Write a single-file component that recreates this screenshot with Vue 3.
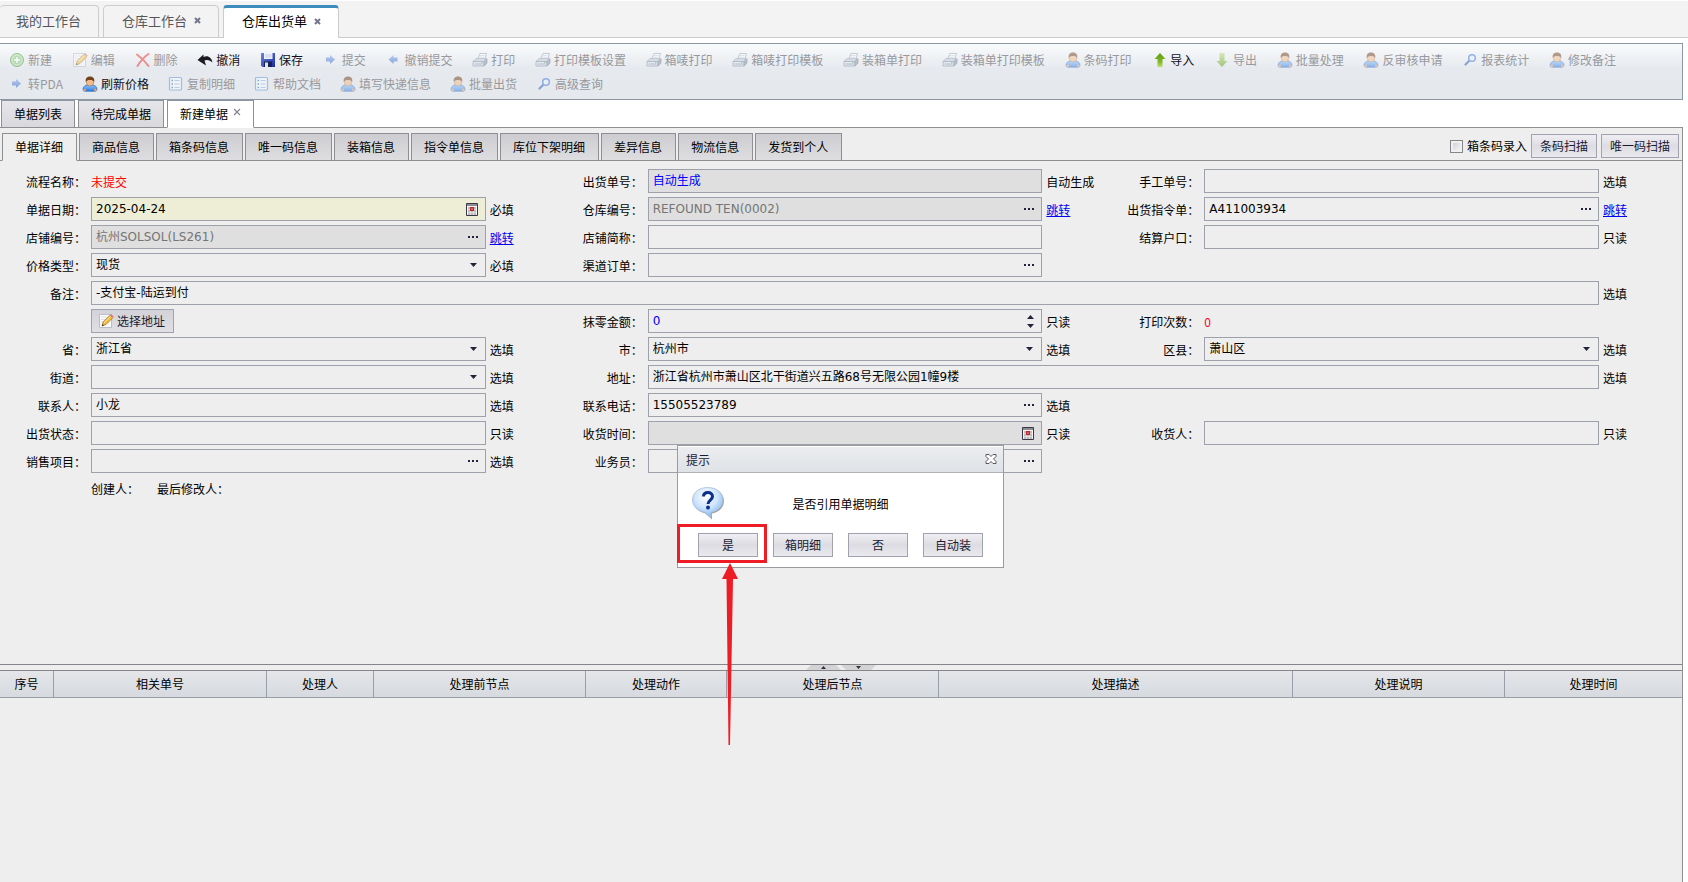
<script setup>
import { ref } from 'vue'

const pageTabs = [
  { name: '我的工作台', closable: false },
  { name: '仓库工作台', closable: true },
  { name: '仓库出货单', closable: true }
]

const toolRows = [
  [
    ['新建', 'add'],
    ['编辑', 'edit'],
    ['删除', 'cross'],
    ['撤消', 'undo', true],
    ['保存', 'save', true],
    ['提交', 'right'],
    ['撤销提交', 'left'],
    ['打印', 'print'],
    ['打印模板设置', 'print'],
    ['箱唛打印', 'print'],
    ['箱唛打印模板', 'print'],
    ['装箱单打印', 'print'],
    ['装箱单打印模板', 'print'],
    ['条码打印', 'user'],
    ['导入', 'up', true],
    ['导出', 'down'],
    ['批量处理', 'user'],
    ['反审核申请', 'user'],
    ['报表统计', 'search'],
    ['修改备注', 'user']
  ],
  [
    ['转PDA', 'right'],
    ['刷新价格', 'user', true],
    ['复制明细', 'list'],
    ['帮助文档', 'list'],
    ['填写快递信息', 'user'],
    ['批量出货', 'user'],
    ['高级查询', 'search']
  ]
]

const docTabs = ['单据列表', '待完成单据', '新建单据']
const infoTabs = ['单据详细', '商品信息', '箱条码信息', '唯一码信息', '装箱信息', '指令单信息', '库位下架明细', '差异信息', '物流信息', '发货到个人']

const rows = ref([
  [
    { id: 'flow', label: '流程名称', kind: 'plain', value: '未提交', tone: 'red' },
    { id: 'outNo', label: '出货单号', kind: 'text', value: '自动生成', tone: 'blue', off: true, hint: '自动生成' },
    { id: 'manualNo', label: '手工单号', kind: 'text', value: '', hint: '选填' }
  ],
  [
    { id: 'docDate', label: '单据日期', kind: 'date', value: '2025-04-24', must: true, hint: '必填' },
    { id: 'depot', label: '仓库编号', kind: 'more', value: 'REFOUND TEN(0002)', off: true, link: '跳转' },
    { id: 'order', label: '出货指令单', kind: 'more', value: 'A411003934', link: '跳转' }
  ],
  [
    { id: 'shop', label: '店铺编号', kind: 'more', value: '杭州SOLSOL(LS261)', off: true, link: '跳转' },
    { id: 'shopName', label: '店铺简称', kind: 'text', value: '' },
    { id: 'account', label: '结算户口', kind: 'text', value: '', hint: '只读' }
  ],
  [
    { id: 'priceType', label: '价格类型', kind: 'select', value: '现货', hint: '必填' },
    { id: 'channel', label: '渠道订单', kind: 'more', value: '' }
  ],
  [{ id: 'remark', label: '备注', kind: 'text', value: '-支付宝-陆运到付', span: 3, hint: '选填' }],
  [
    { id: 'pick', kind: 'button', value: '选择地址' },
    { id: 'rounding', label: '抹零金额', kind: 'spin', value: '0', tone: 'blue', hint: '只读' },
    { id: 'prints', label: '打印次数', kind: 'plain', value: '0', tone: 'pink' }
  ],
  [
    { id: 'province', label: '省', kind: 'select', value: '浙江省', hint: '选填' },
    { id: 'city', label: '市', kind: 'select', value: '杭州市', hint: '选填' },
    { id: 'district', label: '区县', kind: 'select', value: '萧山区', hint: '选填' }
  ],
  [
    { id: 'street', label: '街道', kind: 'select', value: '', hint: '选填' },
    { id: 'address', label: '地址', kind: 'text', value: '浙江省杭州市萧山区北干街道兴五路68号无限公园1幢9楼', span: 2, hint: '选填' }
  ],
  [
    { id: 'contact', label: '联系人', kind: 'text', value: '小龙', hint: '选填' },
    { id: 'phone', label: '联系电话', kind: 'more', value: '15505523789', hint: '选填' }
  ],
  [
    { id: 'state', label: '出货状态', kind: 'text', value: '', hint: '只读' },
    { id: 'received', label: '收货时间', kind: 'date', value: '', off: true, hint: '只读' },
    { id: 'receiver', label: '收货人', kind: 'text', value: '', hint: '只读' }
  ],
  [
    { id: 'project', label: '销售项目', kind: 'more', value: '', hint: '选填' },
    { id: 'clerk', label: '业务员', kind: 'more', value: '' }
  ]
])

const columns = ['序号', '相关单号', '处理人', '处理前节点', '处理动作', '处理后节点', '处理描述', '处理说明', '处理时间']
const answers = ['是', '箱明细', '否', '自动装']
</script>

<template>
  <svg class="sprite" aria-hidden="true">
    <defs>
      <linearGradient id="g-green" x1="0" y1="0" x2="0" y2="1">
        <stop offset="0" stop-color="#5f9a12" /><stop offset="0.6" stop-color="#7fb822" /><stop offset="1" stop-color="#b8de72" />
      </linearGradient>
      <linearGradient id="g-green-down" x1="0" y1="0" x2="0" y2="1">
        <stop offset="0" stop-color="#b8de72" /><stop offset="1" stop-color="#5f9a12" />
      </linearGradient>
      <linearGradient id="g-body" x1="0" y1="0" x2="0" y2="1">
        <stop offset="0" stop-color="#8cc4ff" /><stop offset="1" stop-color="#2b7be0" />
      </linearGradient>
      <linearGradient id="g-arrow" x1="0" y1="0" x2="0" y2="1">
        <stop offset="0" stop-color="#7ea6ee" /><stop offset="1" stop-color="#2a5fc4" />
      </linearGradient>
      <linearGradient id="g-save" x1="0" y1="0" x2="1" y2="1">
        <stop offset="0" stop-color="#6c83e0" /><stop offset="1" stop-color="#1c2c96" />
      </linearGradient>
      <radialGradient id="g-bubble" cx="0.45" cy="0.3" r="0.75">
        <stop offset="0" stop-color="#ffffff" /><stop offset="0.5" stop-color="#cfe4fb" /><stop offset="1" stop-color="#6aaef0" />
      </radialGradient>
    </defs>
    <symbol id="i-add" viewBox="0 0 16 16">
      <circle cx="8" cy="8" r="6.5" fill="#8fd07c" stroke="#3f9a33" />
      <circle cx="8" cy="8" r="5" fill="none" stroke="#c4ebb8" />
      <path d="M6.8 4.5h2.4v2.3h2.3v2.4H9.2v2.3H6.8V9.2H4.5V6.8h2.3z" fill="#fff" stroke="#3f9a33" stroke-width="0.5" />
    </symbol>
    <symbol id="i-edit" viewBox="0 0 16 16">
      <path d="M1.5 1.5h12v13h-12z" fill="#fbfbfd" stroke="#b9bdca" />
      <path d="M3 4h7M3 6.500h5M3 9h3" stroke="#dcdfe8" />
      <path d="M4 13l1.200-4L12 2.200 14.700 4.800 8 11.500z" fill="#f3bd3c" stroke="#a9741c" stroke-width="0.8" />
      <path d="M12 2.200L13.200 1l2.500 2.500-1 1.300z" fill="#e07a7a" />
      <path d="M6 9.700l6.500-6" stroke="#fde7a3" />
      <path d="M4 13l.5-1.900 1.400 1.300z" fill="#33302a" />
    </symbol>
    <symbol id="i-cross" viewBox="0 0 16 16">
      <path d="M3 2.500C7 5.500 12 10.500 14.500 14M14.500 2C10 5 6 10 3.500 14" fill="none" stroke="#e8322a" stroke-width="2" stroke-linecap="round" />
    </symbol>
    <symbol id="i-undo" viewBox="0 0 16 16">
      <path d="M0.500 8L6.500 2.500v2.500C11 3 14.500 5.500 15.500 10.500 13 8 10 7.300 7.500 8.500L9 13.500z" fill="#1c1c20" />
    </symbol>
    <symbol id="i-save" viewBox="0 0 16 16">
      <path d="M1 1h14v14H2.500L1 13.500z" fill="url(#g-save)" />
      <path d="M4 1h8.500v6H4z" fill="#f2f4fc" />
      <path d="M5 3h6.500M5 5h6.500" stroke="#c3cae8" />
      <path d="M4 9.500h8V15H4z" fill="#16205c" />
      <path d="M5 10.500h3V15H5z" fill="#dfe4f6" />
    </symbol>
    <symbol id="i-right" viewBox="0 0 16 16">
      <path d="M3 5.500h4V3L12 7.500 7 12V9.500H3z" fill="url(#g-arrow)" />
    </symbol>
    <symbol id="i-left" viewBox="0 0 16 16">
      <path d="M12.500 5.500h-4V3L3.500 7.500l5 4.500V9.500h4z" fill="url(#g-arrow)" />
    </symbol>
    <symbol id="i-print" viewBox="0 0 16 16">
      <path d="M5.500 7.500L8 1.500h6.500L12.500 8z" fill="#fcfdff" stroke="#7f8da3" stroke-width="0.8" />
      <path d="M8 3.500h4.500M7.300 5.300h4.500" stroke="#b5bfce" stroke-width="0.7" />
      <path d="M1 9.500l3-2.800h10.500L12 9.500z" fill="#c7d0de" stroke="#6d7b92" stroke-width="0.7" />
      <path d="M1 9.500h11V14H1z" fill="#e6ebf3" stroke="#6d7b92" stroke-width="0.8" />
      <path d="M12 9.500l3-2.800v4.500L12 14z" fill="#8592aa" stroke="#5d6b84" stroke-width="0.7" />
      <path d="M2.500 12h8" stroke="#7787a3" />
      <path d="M9 10.700h1.500" stroke="#45b04a" />
    </symbol>
    <symbol id="i-user" viewBox="0 0 16 16">
      <path d="M1 13.500C1 10.500 3.500 9 5.500 9h5c2 0 4.500 1.500 4.500 4.500 0 1-.8 1.700-2 1.700H3c-1.200 0-2-.7-2-1.700z" fill="url(#g-body)" stroke="#2564b8" stroke-width="0.7" />
      <path d="M1 13.500c.2 1 1.200 1.700 2.500 1.700L4 12.500zM15 13.500c-.2 1-1.200 1.700-2.500 1.700L12 12.500z" fill="#f0a868" />
      <ellipse cx="8" cy="6" rx="3.700" ry="4" fill="#f2bd8c" stroke="#9c6234" stroke-width="0.5" />
      <path d="M3.800 6C3 2 5.500.5 8 .5S13 2 12.200 6C11.500 4.500 10 4 8 4S4.500 4.500 3.800 6z" fill="#74421c" />
    </symbol>
    <symbol id="i-up" viewBox="0 0 16 16">
      <path d="M9 1l5.500 6H11.500v8h-5V7H3.500z" fill="url(#g-green)" />
    </symbol>
    <symbol id="i-down" viewBox="0 0 16 16">
      <path d="M8 15l5.500-6H10.500V1h-5v8H2.500z" fill="url(#g-green-down)" />
    </symbol>
    <symbol id="i-search" viewBox="0 0 16 16">
      <path d="M7.500 8.500L3.500 12.500" stroke="#2c5ec0" stroke-width="2.200" stroke-linecap="round" />
      <circle cx="10" cy="6" r="3.300" fill="#eaf3ff" stroke="#3c74d4" stroke-width="1.500" />
    </symbol>
    <symbol id="i-list" viewBox="0 0 16 16">
      <rect x="1.500" y="1.500" width="12" height="12.500" rx="1" fill="#fbfdff" stroke="#5b95d6" stroke-width="1.200" />
      <path d="M3.500 4.500H5M3.500 8H5M3.500 11.500H5" stroke="#2a6dbd" stroke-width="1.500" />
      <path d="M6.500 4.500h5M6.500 8h5M6.500 11.500h5" stroke="#8ab4e2" />
    </symbol>
    <symbol id="i-cal" viewBox="0 0 12 13">
      <path d="M.5.500h11v12H.5z" fill="#f4f4f4" stroke="#3a3844" />
      <path d="M1 2h10" stroke="#8c8c92" stroke-width="2" />
      <path d="M2 4h8v8H2z" fill="#bdbdc0" />
      <path d="M2 6.500h8M2 9.500h8M4.500 4v8M7.500 4v8" stroke="#f4f4f4" stroke-width="0.500" />
      <path d="M4 4h4v4H4z" fill="#c0282c" />
      <path d="M5.500 5.500h1v1h-1z" fill="#fff" />
    </symbol>
  </svg>

  <div class="page">
    <nav class="page-tabs">
      <a v-for="(t, i) in pageTabs" :key="t.name" href="#" class="page-tab" :class="{ active: i === 2 }">
        {{ t.name }}
        <svg v-if="t.closable" class="tab-x" viewBox="0 0 7 7"><path d="M1 1l5 5M6 1L1 6" stroke="#72768c" stroke-width="2" /></svg>
      </a>
    </nav>

    <main class="work">
      <div class="toolbar">
        <div v-for="(row, r) in toolRows" :key="r" class="tool-row">
          <button v-for="[name, icon, on] in row" :key="name" type="button" class="tool" :disabled="!on">
            <svg class="icon"><use :href="'#i-' + icon" /></svg>{{ name }}
          </button>
        </div>
      </div>

      <nav class="doc-tabs">
        <a v-for="(t, i) in docTabs" :key="t" href="#" class="tab doc-tab" :class="{ active: i === 2 }">
          {{ t }}
          <svg v-if="i === 2" class="doc-x" viewBox="0 0 8 8"><path d="M1 1l6 6M7 1L1 7" stroke="#85858f" stroke-width="1.200" /></svg>
        </a>
      </nav>

      <section class="panel">
        <div class="info-bar">
          <nav class="info-tabs">
            <a v-for="(t, i) in infoTabs" :key="t" href="#" class="tab info-tab" :class="{ active: i === 0 }">{{ t }}</a>
          </nav>
          <div class="scan">
            <input id="boxScan" type="checkbox" class="check" />
            <label for="boxScan">箱条码录入</label>
            <button type="button" class="btn">条码扫描</button>
            <button type="button" class="btn">唯一码扫描</button>
          </div>
        </div>

        <form class="form" @submit.prevent>
          <div v-for="(row, r) in rows" :key="r" class="form-row">
            <div v-for="c in row" :key="c.id" class="cell" :class="'span' + (c.span || 1)">
              <span v-if="c.kind === 'plain'" class="label">{{ c.label }}：</span>
              <label v-else-if="c.label" class="label" :for="c.id">{{ c.label }}：</label>
              <span v-else></span>

              <output v-if="c.kind === 'plain'" class="plain" :class="c.tone">{{ c.value }}</output>
              <div v-else-if="c.kind === 'button'">
                <button type="button" class="btn with-icon"><svg class="icon"><use href="#i-edit" /></svg>{{ c.value }}</button>
              </div>
              <div v-else class="field" :class="{ off: c.off, must: c.must }">
                <select v-if="c.kind === 'select'" :id="c.id" v-model="c.value" class="entry">
                  <option :value="c.value">{{ c.value }}</option>
                </select>
                <input v-else :id="c.id" v-model="c.value" type="text" class="entry" :class="c.tone" :readonly="c.off" autocomplete="off" />
                <svg v-if="c.kind === 'select'" class="caret" viewBox="0 0 7 4"><path d="M0 0h7L3.500 4z" fill="#25233a" /></svg>
                <button v-else-if="c.kind === 'more'" type="button" class="pick" aria-label="选择">
                  <svg class="dots" viewBox="0 0 10 2"><path d="M0 0h2v2H0zM4 0h2v2H4zM8 0h2v2H8z" fill="#25233a" /></svg>
                </button>
                <button v-else-if="c.kind === 'date'" type="button" class="pick" aria-label="日期">
                  <svg class="cal"><use href="#i-cal" /></svg>
                </button>
                <button v-else-if="c.kind === 'spin'" type="button" class="pick" aria-label="增减">
                  <svg class="spin" viewBox="0 0 7 13"><path d="M0 4L3.500 0 7 4zM0 9h7l-3.500 4z" fill="#25233a" /></svg>
                </button>
              </div>

              <a v-if="c.link" href="#" class="hint jump">{{ c.link }}</a>
              <span v-else class="hint">{{ c.hint }}</span>
            </div>
          </div>
          <div class="signed"><span>创建人：</span><span>最后修改人：</span></div>
        </form>

        <div class="splitter">
          <svg class="grip" viewBox="0 0 70 5">
            <path d="M0 5L5 0h25l5 5zM35 0h35l-5 5H40z" fill="#d3d3d5" />
            <path d="M15 4h5l-2.500-3zM50 1h5l-2.500 3z" fill="#333" />
          </svg>
        </div>

        <table class="log">
          <thead>
            <tr><th v-for="c in columns" :key="c" scope="col">{{ c }}</th></tr>
          </thead>
        </table>
      </section>

      <div class="layer">
        <div class="dialog" role="dialog" aria-labelledby="dlgTitle">
          <header class="dlg-head">
            <span id="dlgTitle">提示</span>
            <button type="button" class="dlg-close" aria-label="关闭">
              <svg viewBox="0 0 12 10">
                <path d="M1 .5h3l2 2 2-2h3v2L8.500 5 11 7.500v2H8l-2-2-2 2H1v-2L3.500 5 1 2.500z" fill="#fff" stroke="#55555f" />
              </svg>
            </button>
          </header>
          <div class="dlg-body">
            <svg class="ask" viewBox="0 0 32 33">
              <path d="M17 1C8 1 2 6 2 13.500S7 25 13 26.300L20 32.500V26.500C27 25 32 20.500 32 14S26 1 17 1z" fill="#77777e" opacity="0.700" />
              <path d="M15.500.5C7 .5.5 5.500.5 13c0 6.500 5 11 12.500 12.300L19 31v-5.700c7-1.300 12-6 12-12.300C31 5.500 24.500.5 15.500.5z" fill="url(#g-bubble)" stroke="#a9bdd6" stroke-width="0.800" />
              <path d="M11.500 9.500C11.500 6.500 13.500 5.500 16 5.500s4.500 1.500 4.500 4c0 3.500-4.500 3.700-4.500 7.500" fill="none" stroke="#0b2f8c" stroke-width="3" />
              <circle cx="16" cy="20.500" r="2" fill="#0b2f8c" />
            </svg>
            <p class="ask-text">是否引用单据明细</p>
          </div>
          <div class="dlg-actions">
            <button v-for="a in answers" :key="a" type="button" class="btn">{{ a }}</button>
          </div>
          <div class="mark"></div>
          <svg class="pointer" viewBox="0 0 16 182">
            <path d="M8 0l8 16H11L8 182H6.500L4.500 16H0z" fill="#ee1c25" />
          </svg>
        </div>
      </div>
    </main>
  </div>
</template>

<style>
body {
  background: #fff;
}
</style>

<style scoped>
.page,
.page * {
  box-sizing: border-box;
}
.page {
  min-height: 100vh;
  display: flex;
  flex-direction: column;
  padding-top: 1px;
  color: #000;
  font: 12px/16px "Noto Sans CJK SC", sans-serif;
}
.page button,
.page input,
.page select {
  font: inherit;
  margin: 0;
}
.page a {
  color: inherit;
  text-decoration: none;
}
.sprite {
  position: absolute;
  width: 0;
  height: 0;
}

.page-tabs {
  display: flex;
  gap: 4px;
  height: 37px;
  padding-top: 4px;
  background: #f3f3f3;
  border-bottom: 1px solid #ccc;
}
.page .page-tab {
  display: flex;
  align-items: center;
  gap: 7px;
  height: 33px;
  padding: 0 17px 2px 18px;
  border: 1px solid #ccc;
  border-radius: 4px 4px 0 0;
  font-size: 13px;
  color: #55555c;
}
.page .page-tab:first-child {
  padding: 0 17px 2px 16px;
  border-left: 0;
}
.page .page-tab.active {
  padding-bottom: 4px;
  background: #fff;
  border-top: 3px solid #3c8dbc;
  border-bottom: 0;
  color: #000;
}
.tab-x {
  width: 7px;
  height: 7px;
}

.work {
  position: relative;
  flex: 1;
  display: flex;
  flex-direction: column;
  margin: 5px 5px 0 0;
}
.toolbar {
  height: 57px;
  padding: 4px 0;
  border: 1px solid #8c97a3;
  border-left: 0;
  background: linear-gradient(#f9fbfc, #e6e9ee 45%, #e5e8ed);
}
.tool-row {
  display: flex;
  gap: 19px;
  height: 24px;
  padding-left: 9px;
}
.tool-row:first-child {
  gap: 0;
  justify-content: space-between;
  padding-right: 66px;
}
.tool {
  display: flex;
  align-items: center;
  gap: 3px;
  padding: 0;
  border: 0;
  background: none;
  color: #101020;
  white-space: nowrap;
}
.tool:disabled {
  color: #98999d;
}
.tool:disabled .icon {
  opacity: 0.5;
}
.icon {
  width: 16px;
  height: 16px;
  flex: none;
}

.tab {
  display: flex;
  align-items: center;
  height: 28px;
  padding: 0 13px 0 12px;
  border: 1px solid #8f8f92;
}
.doc-tabs {
  display: flex;
  gap: 3px;
  height: 27px;
  padding-left: 1px;
}
.doc-tab {
  padding: 0 12px;
  background: linear-gradient(#e6e6ea, #d8d8dd);
  border-top-color: #8c97a3;
}
.doc-tab.active {
  z-index: 1;
  gap: 5px;
  background: #fff;
  border-bottom-color: #fff;
}
.doc-x {
  width: 8px;
  height: 8px;
  margin-bottom: 4px;
}

.panel {
  flex: 1;
  display: flex;
  flex-direction: column;
  background: #eee;
  border: 1px solid #8f8f92;
  border-width: 1px 1px 0 0;
}
.info-bar {
  display: flex;
  justify-content: space-between;
  height: 33px;
  padding: 5px 3px 0 2px;
  border-bottom: 1px solid #8f8f92;
}
.info-tabs {
  display: flex;
  gap: 2px;
}
.info-tab {
  background: linear-gradient(#cdcdd1, #dedee1);
}
.info-tab.active {
  background: #eee;
  border-bottom-color: #eee;
}
.scan {
  display: flex;
  align-items: center;
  gap: 4px;
  height: 26px;
}
.check {
  appearance: none;
  width: 13px;
  height: 13px;
  border: 1px solid #85858a;
  background: linear-gradient(135deg, #c9cbd0, #fafafa);
  box-shadow: inset 0 0 0 2px #f0f0f0;
}
.btn {
  height: 24px;
  padding: 0 8px;
  border: 1px solid #a0a3af;
  background: linear-gradient(#efeff3, #dcdce2 50%, #e9e9ee);
  color: #1d1b33;
  white-space: nowrap;
}
.with-icon {
  display: flex;
  align-items: center;
  gap: 3px;
  padding: 0 8px 0 6px;
  background: linear-gradient(#d2d2d8, #dfdfe4);
}

.form {
  display: grid;
  gap: 4px;
  padding: 8px 12px 163px 0;
}
.form-row {
  display: grid;
  grid-template-columns: repeat(3, minmax(0, 1fr));
}
.cell {
  display: grid;
  grid-template-columns: 87px minmax(0, 1fr) 67px;
  column-gap: 4px;
  align-items: center;
  height: 24px;
}
.span2 {
  grid-column: span 2;
}
.span3 {
  grid-column: span 3;
}
.label,
.plain,
.hint {
  padding-top: 2px;
}
.label {
  padding-right: 1px;
  text-align: right;
}
.field {
  position: relative;
  display: flex;
  height: 24px;
  border: 1px solid #9ca1aa;
  font-family: "DejaVu Sans", "Noto Sans CJK SC", sans-serif;
}
.off {
  background: #dfdfdf;
}
.off .entry {
  color: #757575;
}
.must {
  background: #eeeed6;
}
.entry {
  appearance: none;
  flex: 1;
  min-width: 0;
  padding: 0 4px;
  border: 0;
  background: none;
  color: #000;
}
.caret {
  position: absolute;
  top: 9px;
  right: 8px;
  width: 7px;
  height: 4px;
  pointer-events: none;
}
.pick {
  display: flex;
  align-items: center;
  justify-content: flex-end;
  width: 24px;
  padding: 0 7px 0 0;
  border: 0;
  background: none;
}
.dots {
  width: 10px;
  height: 2px;
}
.cal {
  width: 12px;
  height: 13px;
}
.spin {
  width: 7px;
  height: 13px;
}
.red {
  color: #f00;
}
.pink {
  color: #ff0033;
}
.entry.blue {
  color: #00f;
}
.page .jump {
  color: #00e;
  text-decoration: underline;
}
.signed {
  display: flex;
  align-items: center;
  gap: 18px;
  height: 24px;
  padding-left: 91px;
}

.splitter {
  display: flex;
  justify-content: center;
  height: 7px;
  border: 1px solid #85858a;
  border-width: 1px 0;
}
.grip {
  width: 70px;
  height: 5px;
}
.log {
  width: 100%;
  table-layout: fixed;
  border-collapse: separate;
  border-spacing: 0;
}
.log th {
  height: 27px;
  padding: 0;
  border: 1px solid #9a9ea6;
  border-width: 0 1px 1px 0;
  background: linear-gradient(#e4e6e9, #d6d9de);
  font-weight: 400;
}
.log th:nth-child(1) {
  width: 54px;
}
.log th:nth-child(2) {
  width: 213px;
}
.log th:nth-child(4),
.log th:nth-child(6),
.log th:nth-child(8) {
  width: 212px;
}
.log th:nth-child(3) {
  width: 107px;
}
.log th:nth-child(5) {
  width: 141px;
}
.log th:nth-child(7) {
  width: 354px;
}
.log th:last-child {
  border-right: 0;
}

.layer {
  position: absolute;
  top: 402px;
  left: 0;
  right: 2px;
  z-index: 2;
  display: flex;
  justify-content: center;
  pointer-events: none;
}
.dialog {
  position: relative;
  width: 327px;
  border: 1px solid #999ba0;
  background: #fff;
  pointer-events: auto;
}
.dlg-head {
  display: flex;
  align-items: center;
  justify-content: space-between;
  height: 27px;
  padding: 0 6px 0 8px;
  border-top: 1px solid #fff;
  border-bottom: 1px solid #b0b2b6;
  background: linear-gradient(#ebedf0, #dfe2e6);
  color: #1d1b33;
}
.dlg-close {
  display: flex;
  padding: 0 0 2px;
  border: 0;
  background: none;
}
.dlg-close svg {
  width: 12px;
  height: 10px;
}
.dlg-body {
  position: relative;
  height: 60px;
  padding: 14px;
}
.ask {
  display: block;
  width: 32px;
  height: 33px;
}
.ask-text {
  position: absolute;
  inset: 23px 0 auto;
  margin: 0;
  text-align: center;
}
.dlg-actions {
  display: grid;
  grid-template-columns: repeat(4, 60px);
  gap: 15px;
  padding: 0 20px 10px;
}
.dlg-actions .btn {
  padding: 0;
}
.mark {
  position: absolute;
  top: 78px;
  left: -1px;
  width: 90px;
  height: 39px;
  border: 3px solid #ee1c25;
  pointer-events: none;
}
.pointer {
  position: absolute;
  top: 117px;
  left: 44px;
  width: 16px;
  height: 182px;
  pointer-events: none;
}
</style>
